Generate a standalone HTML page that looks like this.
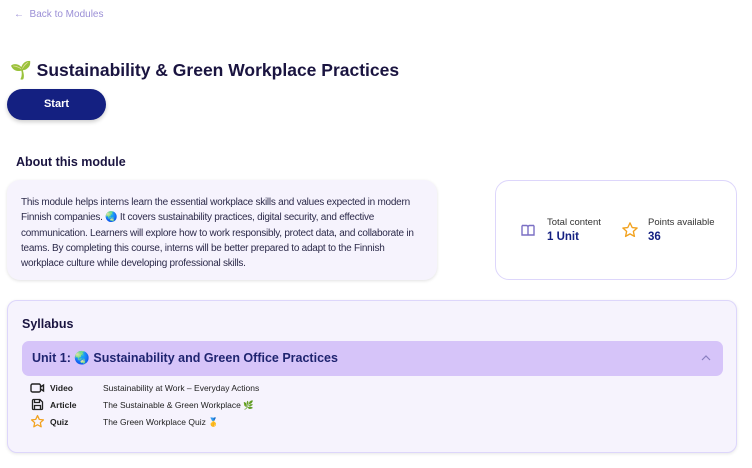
<!DOCTYPE html>
<html><head><meta charset="utf-8"><style>
*{box-sizing:border-box;margin:0;padding:0}
body{width:752px;height:468px;background:#fff;font-family:"Liberation Sans","Noto Sans CJK JP",sans-serif;color:#1e1b3a;position:relative;overflow:hidden}
.abs{position:absolute}
.back{left:14px;top:9px;font-size:10px;color:#9b8fd6}
h1{position:absolute;left:10px;top:60px;font-size:17.5px;font-weight:bold;color:#1a1440;white-space:nowrap}
.start{left:7px;top:89px;width:99px;height:31px;border-radius:16px;background:#142081;color:#fff;font-size:11px;font-weight:bold;text-align:center;line-height:31px;box-shadow:0 2px 4px rgba(0,0,0,.2)}
.h2{left:16px;top:155px;font-size:12.5px;font-weight:bold;color:#1a1440}
.about{left:7px;top:180px;width:430px;height:100px;background:#f6f3fd;border-radius:13px;box-shadow:0 1px 3px rgba(0,0,0,.12);padding:15px 8px 0 14px;font-size:10px;letter-spacing:-0.25px;line-height:15.3px;color:#2c2a4a}
.stats{left:495px;top:180px;width:242px;height:100px;border:1.5px solid #ddd6fb;border-radius:14px;background:#fff}
.lbl{font-size:9.5px;color:#333}
.val{font-size:11.5px;font-weight:bold;color:#142081;margin-top:3px}
.syl{left:7px;top:300px;width:730px;height:153px;background:#f6f3fd;border:1.5px solid #ddd6fb;border-radius:10px;box-shadow:0 1px 3px rgba(0,0,0,.1)}
.unit{left:14px;top:40px;width:701px;height:35px;background:#d6c4f9;border-radius:7px;font-size:12.5px;font-weight:bold;color:#1f2470;padding-left:10px;line-height:35px}
.row{left:10px;font-size:8.5px;color:#222;height:14px;line-height:14px}
.row b{position:absolute;left:32px}
.row span{position:absolute;left:85px;white-space:nowrap}
</style></head><body>
<div class="abs back">← &nbsp;Back to Modules</div>
<h1>🌱 Sustainability &amp; Green Workplace Practices</h1>
<div class="abs start">Start</div>
<div class="abs h2">About this module</div>
<div class="abs about">This module helps interns learn the essential workplace skills and values expected in modern Finnish companies. 🌏 It covers sustainability practices, digital security, and effective communication. Learners will explore how to work responsibly, protect data, and collaborate in teams. By completing this course, interns will be better prepared to adapt to the Finnish workplace culture while developing professional skills.</div>
<div class="abs stats">
 <svg class="abs" style="left:24px;top:42px" width="16" height="14" viewBox="0 0 16 14"><path d="M2 2.5h4.5a1.5 1.5 0 0 1 1.5 1.5v8.5M14 2.5H9.5A1.5 1.5 0 0 0 8 4v8.5M2 2.5v9.5h12V2.5" fill="none" stroke="#7a6fc4" stroke-width="1.4"/></svg>
 <div class="abs" style="left:51px;top:36px"><div class="lbl">Total content</div><div class="val">1 Unit</div></div>
 <svg class="abs" style="left:125px;top:40px" width="18" height="18" viewBox="0 0 24 24"><path d="M12 2.5l2.9 6.2 6.6.7-5 4.5 1.4 6.6L12 17.2l-5.9 3.3 1.4-6.6-5-4.5 6.6-.7z" fill="none" stroke="#f2a21e" stroke-width="1.8" stroke-linejoin="round"/></svg>
 <div class="abs" style="left:152px;top:36px"><div class="lbl">Points available</div><div class="val">36</div></div>
</div>
<div class="abs syl">
 <div class="abs" style="left:14px;top:16px;font-size:12.5px;font-weight:bold;color:#1a1440">Syllabus</div>
 <div class="abs unit">Unit 1: 🌏 Sustainability and Green Office Practices
  <svg class="abs" style="right:12px;top:13px" width="10" height="7" viewBox="0 0 10 7"><path d="M1 6l4-4 4 4" fill="none" stroke="#8a7fc0" stroke-width="1.2"/></svg></div>
 <div class="abs row" style="top:80px"><svg class="abs" style="left:12px;top:2px" width="15" height="10" viewBox="0 0 15 10"><rect x="1" y="1" width="9.5" height="8" rx="1.5" fill="none" stroke="#222" stroke-width="1.4"/><path d="M10.5 4l3-2v6l-3-2" fill="none" stroke="#222" stroke-width="1.4"/></svg><b>Video</b><span>Sustainability at Work – Everyday Actions</span></div>
 <div class="abs row" style="top:97px"><svg class="abs" style="left:13px;top:0px" width="13" height="13" viewBox="0 0 13 13"><path d="M1.5 2.5a1 1 0 0 1 1-1h6.5l2.5 2.5v6.5a1 1 0 0 1-1 1h-8a1 1 0 0 1-1-1z M3.5 1.5v3h5v-3 M3.5 11.5v-4h6v4" fill="none" stroke="#222" stroke-width="1.3"/></svg><b>Article</b><span>The Sustainable &amp; Green Workplace 🌿</span></div>
 <div class="abs row" style="top:114px"><svg class="abs" style="left:12px;top:-1px" width="15" height="15" viewBox="0 0 24 24"><path d="M12 2.5l2.9 6.2 6.6.7-5 4.5 1.4 6.6L12 17.2l-5.9 3.3 1.4-6.6-5-4.5 6.6-.7z" fill="none" stroke="#f2a21e" stroke-width="2" stroke-linejoin="round"/></svg><b>Quiz</b><span>The Green Workplace Quiz 🥇</span></div>
</div>
</body></html>
